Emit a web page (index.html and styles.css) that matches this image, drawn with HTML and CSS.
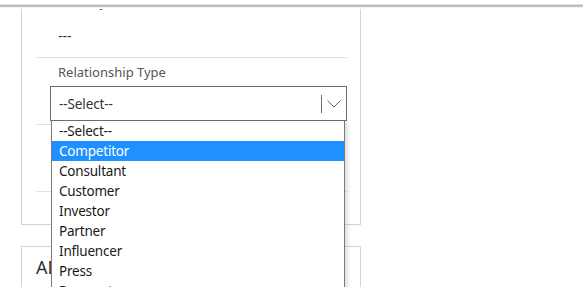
FILE: index.html
```html
<!DOCTYPE html>
<html>
<head>
<meta charset="utf-8">
<link rel="stylesheet" href="styles.css">
</head>
<body>
<div class="topbar"></div>
<main class="page">
  <section class="card card-details">
    <div class="field">
      <div class="label">Primary Contact</div>
      <div class="value">---</div>
    </div>
    <div class="field">
      <div class="label">Relationship Type</div>
      <div class="select-wrap">
        <div class="select">
          <span class="select-text">--Select--</span>
          <span class="select-divider"></span>
          <svg class="chevron" width="14" height="8" viewBox="0 0 14 8"><path d="M0.5 0.5 L7 7 L13.5 0.5" fill="none" stroke="#6a6a6a" stroke-width="1"/></svg>
        </div>
        <ul class="options">
          <li>--Select--</li>
          <li class="active">Competitor</li>
          <li>Consultant</li>
          <li>Customer</li>
          <li>Investor</li>
          <li>Partner</li>
          <li>Influencer</li>
          <li>Press</li>
          <li>Prospect</li>
        </ul>
      </div>
    </div>
    <div class="field">
      <div class="label">Industry</div>
      <div class="value">---</div>
    </div>
  </section>
  <section class="card card-address">
    <h2 class="card-title">ADDRESS</h2>
  </section>
</main>
</body>
</html>
```
FILE: styles.css
```css
html, body {
  margin: 0;
  padding: 0;
  background: #ffffff;
  overflow: hidden;
  height: 287px;
}
body {
  font-family: "Noto Sans", "Open Sans", sans-serif;
  color: #333333;
}
.topbar {
  position: fixed;
  top: 0;
  left: 0;
  right: 0;
  height: 9px;
  background: linear-gradient(to bottom, #ffffff 0, #ffffff 4px, #c4c4c4 5px, #a8a8a8 6px, #e4e4e4 7px, #ffffff 8px, #ffffff 9px);
  z-index: 10;
}
.page {
  padding-left: 21px;
}
.card {
  width: 338px;
  border: 1px solid #d4d4d4;
  background: #fff;
  box-sizing: content-box;
}
.card-details {
  margin-top: -9px;
  border-top: none;
  padding: 0 13px 32px 14px;
  width: 311px;
}
.field {
  border-bottom: 1px solid #e2e2e2;
  padding: 5px 0 3px 14px;
  height: 58px;
}
.label {
  font-size: 13px;
  line-height: 18px;
  height: 18px;
  color: #555555;
  padding-left: 8px;
  white-space: nowrap;
}
.field:first-child .label {
  margin-top: -3px;
}
.value {
  margin-top: 5px;
  height: 34px;
  line-height: 34px;
  font-size: 14px;
  padding-left: 8px;
  color: #333;
}
.field:first-child .value {
  margin-top: 8px;
}
.select-wrap {
  position: relative;
  margin-top: 5px;
}
.select {
  height: 33px;
  border: 1px solid #6e6e6e;
  display: flex;
  align-items: center;
  padding-left: 8px;
  font-size: 13.5px;
  letter-spacing: -0.1px;
  color: #333;
  box-shadow: 0 2px 2px rgba(0, 0, 0, 0.08);
  background: #fff;
}
.select-text {
  flex: 1;
  padding-top: 1px;
}
.select-divider {
  width: 1px;
  height: 18px;
  background: #6e6e6e;
  margin-right: 5px;
}
.chevron {
  margin-right: 5px;
  margin-top: 1px;
}
.options {
  position: absolute;
  top: 35px;
  left: 1px;
  width: 292px;
  margin: 0;
  padding: 0;
  list-style: none;
  border: 1px solid #7a7a7a;
  border-top: none;
  background: #fff;
  box-shadow: 3px 3px 4px rgba(0, 0, 0, 0.12);
  z-index: 5;
}
.options li {
  height: 20px;
  line-height: 20px;
  font-size: 13.5px;
  letter-spacing: -0.2px;
  padding-left: 7px;
  color: #1a1a1a;
  white-space: nowrap;
}
.options li.active {
  background: #1e90ff;
  color: #ffffff;
}
.card-address {
  margin-top: 21px;
  height: 60px;
  padding: 0 14px;
  width: 310px;
}
.card-title {
  margin: 0;
  padding-top: 8px;
  font-size: 18px;
  line-height: 24px;
  font-weight: normal;
  color: #333;
}
```
